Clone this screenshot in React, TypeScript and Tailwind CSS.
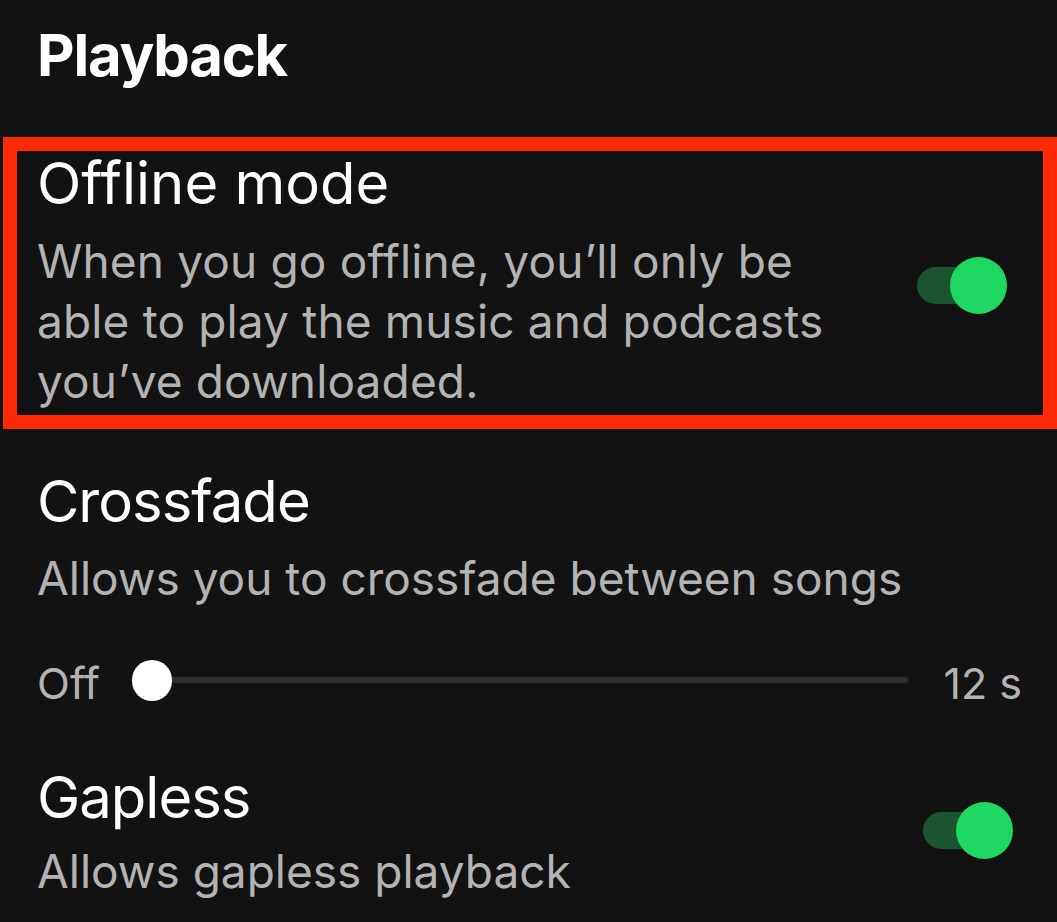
import React from "react";

function Toggle({ className = "" }: { className?: string }) {
  return (
    <div className={`relative w-[90px] h-[57px] shrink-0 ${className}`}>
      <div className="absolute left-0 top-[10px] w-[72px] h-[37px] rounded-full bg-[#1b5430]" />
      <div className="absolute right-0 top-0 w-[57px] h-[57px] rounded-full bg-[#1ed760]" />
    </div>
  );
}

export default function App() {
  return (
    <div
      className="w-[1057px] h-[922px] overflow-hidden bg-[#121212] text-white"
      style={{ fontFamily: "Inter, 'Noto Sans', sans-serif" }}
    >
      <div className="pt-[20px] pl-[37px]">
        <h1 className="text-[58px] leading-[70px] font-bold tracking-[-1.2px]">Playback</h1>
      </div>

      <div className="mt-[47px] ml-[3px] border-[14px] border-[#ff2a05] pl-[20px] pr-[36px] pb-[4px]">
        <div className="flex items-center justify-between">
          <div>
            <div className="text-[58px] leading-[64px] font-normal">Offline mode</div>
            <div className="mt-[16px] text-[46px] leading-[60px] text-[#b3b3b3] whitespace-nowrap tracking-[0.15px]">
              <div>When you go offline, you’ll only be</div>
              <div>able to play the music and podcasts</div>
              <div>you’ve downloaded.</div>
            </div>
          </div>
          <Toggle className="mt-[9px]" />
        </div>
      </div>

      <div className="pl-[37px] pr-[35px]">
        <div className="mt-[40px] text-[58px] leading-[64px] tracking-[-1px]">Crossfade</div>
        <div className="mt-[15px] text-[46px] leading-[60px] text-[#b3b3b3] whitespace-nowrap">
          Allows you to crossfade between songs
        </div>

        <div className="mt-[47px] h-[50px] flex items-center text-[43px] leading-[50px] text-[#b3b3b3]">
          <span className="pt-[6px]">Off</span>
          <div className="relative ml-[32px] w-[776px] h-[41px] flex items-center">
            <div className="w-full h-[6px] rounded-full bg-[#2e2e2e]" />
            <div className="absolute left-0 top-0 w-[40px] h-[41px] rounded-full bg-white" />
          </div>
          <span className="ml-auto pt-[6px]">12 s</span>
        </div>
      </div>

      <div className="pl-[37px] pr-[44px] flex items-center justify-between">
        <div>
          <div className="mt-[60px] text-[58px] leading-[64px] tracking-[-1px]">Gapless</div>
          <div className="mt-[12px] text-[46px] leading-[60px] text-[#b3b3b3] whitespace-nowrap">
            Allows gapless playback
          </div>
        </div>
        <Toggle className="mt-[54px]" />
      </div>
    </div>
  );
}
